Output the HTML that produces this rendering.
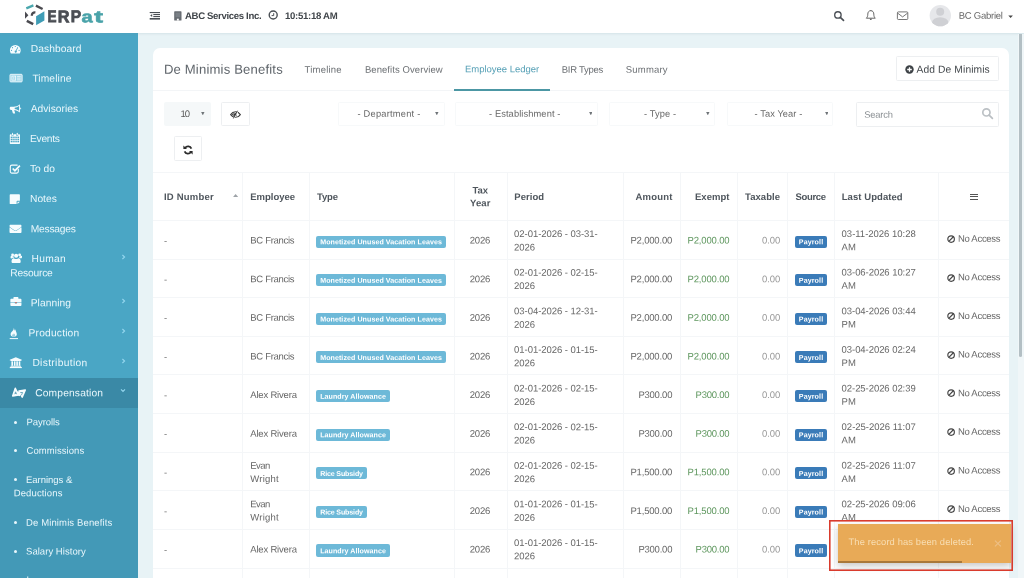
<!DOCTYPE html>
<html lang="en"><head><meta charset="utf-8"><title>ERPat - De Minimis Benefits</title>
<style>
html,body{margin:0;padding:0;}
body{width:1024px;height:578px;overflow:hidden;position:relative;background:#e8f3f6;font-family:"Liberation Sans",sans-serif;}
.b{position:absolute;box-sizing:border-box;display:block;}
.t{position:absolute;white-space:nowrap;display:block;transform-origin:0 0;}
#w{position:absolute;left:0;top:0;width:1024px;height:578px;overflow:hidden;will-change:transform;}
</style></head><body><div id="w">
<div class="b" style="left:153.0px;top:48.0px;width:856.00px;height:552.00px;background:#fff;border-radius:7px 7px 0 0;"></div>
<div class="b" style="left:0.0px;top:33.4px;width:138.40px;height:544.60px;background:#4aa6c5;"></div>
<div class="b" style="left:0.0px;top:407.8px;width:138.40px;height:170.20px;background:#4399b7;"></div>
<div class="b" style="left:0.0px;top:378.1px;width:138.40px;height:29.70px;background:#3a89a6;"></div>
<div class="b" style="left:0.0px;top:0.0px;width:1024.00px;height:33.40px;background:#fff;box-shadow:0 1px 2px rgba(120,150,160,.16);"></div>
<div class="b" style="left:1018.2px;top:34.0px;width:5.80px;height:544.00px;background:#f0f6f8;"></div>
<div class="b" style="left:1018.7px;top:34.0px;width:3.60px;height:323.00px;background:#b3bfc4;border-radius:0 0 2px 2px;"></div>
<span class="t" style="left:47px;top:6px;font-size:16.8px;line-height:21px;color:#4b4e54;transform:translate(0.60px,0.20px) rotate(.03deg) scaleX(0.8090);font-weight:700;-webkit-text-stroke:.8px #4b4e54;">E</span>
<span class="t" style="left:57px;top:6px;font-size:16.8px;line-height:21px;color:#4b4e54;transform:translate(0.80px,0.20px) rotate(.03deg) scaleX(0.9649);font-weight:700;-webkit-text-stroke:.8px #4b4e54;">R</span>
<span class="t" style="left:70px;top:6px;font-size:16.8px;line-height:21px;color:#4b4e54;transform:translate(0.80px,0.20px) rotate(.03deg) scaleX(0.9258);font-weight:700;-webkit-text-stroke:.8px #4b4e54;">P</span>
<span class="t" style="left:81px;top:6px;font-size:16.4px;line-height:20px;color:#4aa3a9;transform:translate(0.60px,0.30px) rotate(.03deg) scaleX(1.2216);font-weight:700;-webkit-text-stroke:.6px #4aa3a9;">a</span>
<span class="t" style="left:94px;top:6px;font-size:16.4px;line-height:20px;color:#4aa3a9;transform:translate(0.20px,0.30px) rotate(.03deg) scaleX(1.6000);font-weight:700;-webkit-text-stroke:.6px #4aa3a9;">t</span>
<span class="t" style="left:185px;top:8px;font-size:9.6px;line-height:13px;color:#41464b;transform:translate(0.00px,0.90px) rotate(.03deg);font-weight:700;letter-spacing:-0.348px;">ABC Services Inc.</span>
<span class="t" style="left:285px;top:8px;font-size:9.6px;line-height:13px;color:#41464b;transform:translate(0.00px,0.90px) rotate(.03deg);font-weight:700;letter-spacing:-0.287px;">10:51:18 AM</span>
<span class="t" style="left:958px;top:8px;font-size:9.5px;line-height:13px;color:#666;transform:translate(0.70px,0.80px) rotate(.03deg);letter-spacing:-0.244px;">BC Gabriel</span>
<span class="t" style="left:30px;top:41px;font-size:10.25px;line-height:13px;color:#e9f7fc;transform:translate(0.70px,0.90px) rotate(.03deg);letter-spacing:0.072px;">Dashboard</span>
<span class="t" style="left:32px;top:71px;font-size:10.25px;line-height:13px;color:#e9f7fc;transform:translate(0.40px,0.70px) rotate(.03deg);letter-spacing:0.089px;">Timeline</span>
<span class="t" style="left:30px;top:102px;font-size:10.25px;line-height:13px;color:#e9f7fc;transform:translate(0.70px,0.10px) rotate(.03deg);letter-spacing:0.006px;">Advisories</span>
<span class="t" style="left:30px;top:132px;font-size:10.25px;line-height:13px;color:#e9f7fc;transform:translate(0.00px,0.10px) rotate(.03deg);letter-spacing:-0.275px;">Events</span>
<span class="t" style="left:30px;top:162px;font-size:10.25px;line-height:13px;color:#e9f7fc;transform:translate(0.00px,0.00px) rotate(.03deg);letter-spacing:-0.031px;">To do</span>
<span class="t" style="left:30px;top:192px;font-size:10.25px;line-height:13px;color:#e9f7fc;transform:translate(0.00px,0.00px) rotate(.03deg);letter-spacing:0.012px;">Notes</span>
<span class="t" style="left:30px;top:222px;font-size:10.25px;line-height:13px;color:#e9f7fc;transform:translate(0.70px,0.20px) rotate(.03deg);letter-spacing:-0.207px;">Messages</span>
<span class="t" style="left:31px;top:252px;font-size:10.25px;line-height:13px;color:#e9f7fc;transform:translate(0.60px,0.10px) rotate(.03deg);letter-spacing:0.250px;">Human</span>
<span class="t" style="left:10px;top:266px;font-size:10.25px;line-height:13px;color:#e9f7fc;transform:translate(0.30px,0.30px) rotate(.03deg);letter-spacing:-0.196px;">Resource</span>
<span class="t" style="left:30px;top:296px;font-size:10.25px;line-height:13px;color:#e9f7fc;transform:translate(0.70px,0.30px) rotate(.03deg);letter-spacing:0.061px;">Planning</span>
<span class="t" style="left:28px;top:326px;font-size:10.25px;line-height:13px;color:#e9f7fc;transform:translate(0.60px,0.20px) rotate(.03deg);letter-spacing:0.178px;">Production</span>
<span class="t" style="left:32px;top:356px;font-size:10.25px;line-height:13px;color:#e9f7fc;transform:translate(0.40px,0.10px) rotate(.03deg);letter-spacing:0.323px;">Distribution</span>
<span class="t" style="left:35px;top:386px;font-size:10.25px;line-height:13px;color:#e9f7fc;transform:translate(0.20px,0.30px) rotate(.03deg);letter-spacing:0.152px;">Compensation</span>
<span class="t" style="left:26px;top:415px;font-size:9.5px;line-height:13px;color:#e9f7fc;transform:translate(0.60px,0.20px) rotate(.03deg);letter-spacing:-0.079px;">Payrolls</span>
<span class="t" style="left:26px;top:443px;font-size:9.5px;line-height:13px;color:#e9f7fc;transform:translate(0.60px,0.80px) rotate(.03deg);letter-spacing:0.060px;">Commissions</span>
<span class="t" style="left:26px;top:473px;font-size:9.5px;line-height:13px;color:#e9f7fc;transform:translate(0.00px,0.00px) rotate(.03deg);letter-spacing:-0.022px;">Earnings &amp;</span>
<span class="t" style="left:13px;top:486px;font-size:9.5px;line-height:13px;color:#e9f7fc;transform:translate(0.70px,0.30px) rotate(.03deg);letter-spacing:0.133px;">Deductions</span>
<span class="t" style="left:26px;top:515px;font-size:9.5px;line-height:13px;color:#e9f7fc;transform:translate(0.00px,0.70px) rotate(.03deg);letter-spacing:0.128px;">De Minimis Benefits</span>
<span class="t" style="left:26px;top:544px;font-size:9.5px;line-height:13px;color:#e9f7fc;transform:translate(0.00px,0.60px) rotate(.03deg);letter-spacing:0.044px;">Salary History</span>
<span class="t" style="left:26px;top:573px;font-size:9.5px;line-height:13px;color:#e9f7fc;transform:translate(0.40px,0.00px) rotate(.03deg);letter-spacing:-0.069px;">Loans</span>
<div class="b" style="left:13.5px;top:420.5px;width:3.00px;height:3.00px;background:#e9f7fc;border-radius:50%;"></div>
<div class="b" style="left:13.5px;top:449.1px;width:3.00px;height:3.00px;background:#e9f7fc;border-radius:50%;"></div>
<div class="b" style="left:13.5px;top:478.3px;width:3.00px;height:3.00px;background:#e9f7fc;border-radius:50%;"></div>
<div class="b" style="left:13.5px;top:521.0px;width:3.00px;height:3.00px;background:#e9f7fc;border-radius:50%;"></div>
<div class="b" style="left:13.5px;top:549.9px;width:3.00px;height:3.00px;background:#e9f7fc;border-radius:50%;"></div>
<div class="b" style="left:13.5px;top:578.7px;width:3.00px;height:3.00px;background:#e9f7fc;border-radius:50%;"></div>
<span class="t" style="left:163px;top:60px;font-size:13.1px;line-height:17px;color:#5f656b;transform:translate(0.90px,0.80px) rotate(.03deg);letter-spacing:0.172px;">De Minimis Benefits</span>
<span class="t" style="left:304px;top:62px;font-size:9.5px;line-height:13px;color:#6b6f73;transform:translate(0.60px,0.70px) rotate(.03deg);letter-spacing:0.200px;">Timeline</span>
<span class="t" style="left:364px;top:62px;font-size:9.5px;line-height:13px;color:#6b6f73;transform:translate(0.90px,0.70px) rotate(.03deg);letter-spacing:0.072px;">Benefits Overview</span>
<span class="t" style="left:465px;top:62px;font-size:9.5px;line-height:13px;color:#549fb5;transform:translate(0.00px,0.30px) rotate(.03deg);letter-spacing:-0.021px;">Employee Ledger</span>
<span class="t" style="left:561px;top:62px;font-size:9.5px;line-height:13px;color:#6b6f73;transform:translate(0.80px,0.70px) rotate(.03deg);letter-spacing:-0.278px;">BIR Types</span>
<span class="t" style="left:625px;top:62px;font-size:9.5px;line-height:13px;color:#6b6f73;transform:translate(0.80px,0.70px) rotate(.03deg);letter-spacing:0.196px;">Summary</span>
<div class="b" style="left:153.0px;top:90.0px;width:856.00px;height:1.00px;background:#f3f5f7;"></div>
<div class="b" style="left:454.3px;top:88.9px;width:95.60px;height:1.70px;background:#4c97a4;"></div>
<div class="b" style="left:895.6px;top:56.0px;width:103.40px;height:25.00px;border:1px solid #edeff1;border-radius:1.5px;background:#fff;"></div>
<span class="t" style="left:916px;top:62px;font-size:10.25px;line-height:13px;color:#42474b;transform:translate(0.60px,0.70px) rotate(.03deg);letter-spacing:0.104px;">Add De Minimis</span>
<div class="b" style="left:164.0px;top:102.3px;width:46.60px;height:23.40px;background:#f5f8f9;border-radius:2px;"></div>
<span class="t" style="left:180px;top:106px;font-size:9.5px;line-height:13px;color:#5a5a5a;transform:translate(0.60px,0.90px) rotate(.03deg);letter-spacing:-1.025px;">10</span>
<div class="b" style="left:221.0px;top:102.0px;width:28.80px;height:24.20px;border:1px solid #edeff1;border-radius:1.5px;background:#fff;"></div>
<div class="b" style="left:174.0px;top:136.0px;width:28.00px;height:25.00px;border:1px solid #edeff1;border-radius:1.5px;background:#fff;"></div>
<div class="b" style="left:338.0px;top:102.3px;width:106.50px;height:23.40px;border:1px solid #f7f9fa;border-radius:1.5px;background:#fff;"></div>
<span class="t" style="left:357px;top:107px;font-size:9.3px;line-height:12px;color:#666;transform:translate(0.50px,0.80px) rotate(.03deg);letter-spacing:0.221px;">- Department -</span>
<svg class="b" style="left:435.2px;top:111.8px;" width="3.6" height="3.4" viewBox="0 0 4 4"><path d="M0 0h4L2 4z" fill="#6f7478"/></svg>
<div class="b" style="left:454.6px;top:102.3px;width:143.60px;height:23.40px;border:1px solid #f7f9fa;border-radius:1.5px;background:#fff;"></div>
<span class="t" style="left:489px;top:107px;font-size:9.3px;line-height:12px;color:#666;transform:translate(0.00px,0.80px) rotate(.03deg);letter-spacing:0.102px;">- Establishment -</span>
<svg class="b" style="left:588.5px;top:111.8px;" width="3.6" height="3.4" viewBox="0 0 4 4"><path d="M0 0h4L2 4z" fill="#6f7478"/></svg>
<div class="b" style="left:609.0px;top:102.3px;width:106.40px;height:23.40px;border:1px solid #f7f9fa;border-radius:1.5px;background:#fff;"></div>
<span class="t" style="left:644px;top:107px;font-size:9.3px;line-height:12px;color:#666;transform:translate(0.00px,0.80px) rotate(.03deg);letter-spacing:0.107px;">- Type -</span>
<svg class="b" style="left:706.2px;top:111.8px;" width="3.6" height="3.4" viewBox="0 0 4 4"><path d="M0 0h4L2 4z" fill="#6f7478"/></svg>
<div class="b" style="left:727.3px;top:102.3px;width:105.50px;height:23.40px;border:1px solid #f7f9fa;border-radius:1.5px;background:#fff;"></div>
<span class="t" style="left:754px;top:107px;font-size:9.3px;line-height:12px;color:#666;transform:translate(0.60px,0.80px) rotate(.03deg);letter-spacing:0.070px;">- Tax Year -</span>
<svg class="b" style="left:824.5px;top:111.8px;" width="3.6" height="3.4" viewBox="0 0 4 4"><path d="M0 0h4L2 4z" fill="#6f7478"/></svg>
<svg class="b" style="left:201.1px;top:111.8px;" width="3.6" height="3.4" viewBox="0 0 4 4"><path d="M0 0h4L2 4z" fill="#6f7478"/></svg>
<div class="b" style="left:856.0px;top:102.0px;width:142.60px;height:24.60px;border:1px solid #edeff1;border-radius:1.5px;background:#fff;"></div>
<span class="t" style="left:864px;top:108px;font-size:9.35px;line-height:12px;color:#8a8f93;transform:translate(0.20px,0.80px) rotate(.03deg);letter-spacing:-0.190px;">Search</span>
<div class="b" style="left:153.0px;top:172.0px;width:856.00px;height:1.00px;background:#f4f6f8;"></div>
<div class="b" style="left:153.0px;top:220.0px;width:856.00px;height:1.00px;background:#f4f6f8;"></div>
<div class="b" style="left:153.0px;top:258.62px;width:856.00px;height:1.00px;background:#f4f6f8;"></div>
<div class="b" style="left:153.0px;top:297.24px;width:856.00px;height:1.00px;background:#f4f6f8;"></div>
<div class="b" style="left:153.0px;top:335.86px;width:856.00px;height:1.00px;background:#f4f6f8;"></div>
<div class="b" style="left:153.0px;top:374.48px;width:856.00px;height:1.00px;background:#f4f6f8;"></div>
<div class="b" style="left:153.0px;top:413.1px;width:856.00px;height:1.00px;background:#f4f6f8;"></div>
<div class="b" style="left:153.0px;top:451.72px;width:856.00px;height:1.00px;background:#f4f6f8;"></div>
<div class="b" style="left:153.0px;top:490.34px;width:856.00px;height:1.00px;background:#f4f6f8;"></div>
<div class="b" style="left:153.0px;top:528.96px;width:856.00px;height:1.00px;background:#f4f6f8;"></div>
<div class="b" style="left:153.0px;top:567.58px;width:856.00px;height:1.00px;background:#f4f6f8;"></div>
<div class="b" style="left:242.0px;top:172.0px;width:1.00px;height:428.00px;background:#f4f6f8;"></div>
<div class="b" style="left:309.2px;top:172.0px;width:1.00px;height:428.00px;background:#f4f6f8;"></div>
<div class="b" style="left:454.1px;top:172.0px;width:1.00px;height:428.00px;background:#f4f6f8;"></div>
<div class="b" style="left:506.7px;top:172.0px;width:1.00px;height:428.00px;background:#f4f6f8;"></div>
<div class="b" style="left:622.7px;top:172.0px;width:1.00px;height:428.00px;background:#f4f6f8;"></div>
<div class="b" style="left:680.0px;top:172.0px;width:1.00px;height:428.00px;background:#f4f6f8;"></div>
<div class="b" style="left:737.0px;top:172.0px;width:1.00px;height:428.00px;background:#f4f6f8;"></div>
<div class="b" style="left:787.0px;top:172.0px;width:1.00px;height:428.00px;background:#f4f6f8;"></div>
<div class="b" style="left:834.0px;top:172.0px;width:1.00px;height:428.00px;background:#f4f6f8;"></div>
<div class="b" style="left:937.7px;top:172.0px;width:1.00px;height:428.00px;background:#f4f6f8;"></div>
<span class="t" style="left:163px;top:190px;font-size:9.5px;line-height:13px;color:#4f565d;transform:translate(0.90px,0.10px) rotate(.03deg);font-weight:700;letter-spacing:0.225px;">ID Number</span>
<span class="t" style="left:250px;top:190px;font-size:9.5px;line-height:13px;color:#4f565d;transform:translate(0.30px,0.10px) rotate(.03deg);font-weight:700;letter-spacing:-0.025px;">Employee</span>
<span class="t" style="left:317px;top:190px;font-size:9.5px;line-height:13px;color:#4f565d;transform:translate(0.00px,0.10px) rotate(.03deg);font-weight:700;letter-spacing:-0.167px;">Type</span>
<span class="t" style="left:472px;top:183px;font-size:9.5px;line-height:13px;color:#4f565d;transform:translate(0.50px,0.50px) rotate(.03deg);font-weight:700;letter-spacing:-0.062px;">Tax</span>
<span class="t" style="left:470px;top:196px;font-size:9.5px;line-height:13px;color:#4f565d;transform:translate(0.00px,0.30px) rotate(.03deg);font-weight:700;letter-spacing:0.125px;">Year</span>
<span class="t" style="left:514px;top:190px;font-size:9.5px;line-height:13px;color:#4f565d;transform:translate(0.30px,0.10px) rotate(.03deg);font-weight:700;letter-spacing:0.040px;">Period</span>
<span class="t" style="left:635px;top:190px;font-size:9.5px;line-height:13px;color:#4f565d;transform:translate(0.40px,0.10px) rotate(.03deg);font-weight:700;letter-spacing:0.225px;">Amount</span>
<span class="t" style="left:695px;top:190px;font-size:9.5px;line-height:13px;color:#4f565d;transform:translate(0.00px,0.10px) rotate(.03deg);font-weight:700;letter-spacing:0.025px;">Exempt</span>
<span class="t" style="left:745px;top:190px;font-size:9.5px;line-height:13px;color:#4f565d;transform:translate(0.00px,0.10px) rotate(.03deg);font-weight:700;letter-spacing:0.062px;">Taxable</span>
<span class="t" style="left:795px;top:190px;font-size:9.5px;line-height:13px;color:#4f565d;transform:translate(0.50px,0.10px) rotate(.03deg);font-weight:700;letter-spacing:-0.350px;">Source</span>
<span class="t" style="left:841px;top:190px;font-size:9.5px;line-height:13px;color:#4f565d;transform:translate(0.70px,0.10px) rotate(.03deg);font-weight:700;letter-spacing:0.070px;">Last Updated</span>
<div class="b" style="left:969.8px;top:193.7px;width:8.20px;height:1.20px;background:#555;"></div>
<div class="b" style="left:969.8px;top:196.25px;width:8.20px;height:1.20px;background:#555;"></div>
<div class="b" style="left:969.8px;top:198.79999999999998px;width:8.20px;height:1.20px;background:#555;"></div>
<svg class="b" style="left:232.8px;top:193.6px;" width="5.2" height="3.1" viewBox="0 0 44 26"><path d="M0 26h44L22 0z" fill="#9ea3a8"/></svg>
<span class="t" style="left:164px;top:234px;font-size:9.5px;line-height:13px;color:#777;transform:translate(0.00px,0.10px) rotate(.03deg);">-</span>
<span class="t" style="left:250px;top:233px;font-size:9.5px;line-height:13px;color:#666;transform:translate(0.30px,0.60px) rotate(.03deg);letter-spacing:-0.300px;">BC Francis</span>
<div class="b" style="left:316.3px;top:235.5px;width:130.00px;height:12.10px;background:#6db9d8;border-radius:2px;"></div>
<span class="t" style="left:320px;top:237px;font-size:7.1px;line-height:10px;color:#fff;transform:translate(0.20px,0.20px) rotate(.03deg);font-weight:700;letter-spacing:0.059px;">Monetized Unused Vacation Leaves</span>
<span class="t" style="left:469px;top:233px;font-size:9.5px;line-height:13px;color:#666;transform:translate(0.80px,0.60px) rotate(.03deg);letter-spacing:-0.208px;">2026</span>
<span class="t" style="left:514px;top:227px;font-size:9.5px;line-height:13px;color:#666;transform:translate(0.10px,0.00px) rotate(.03deg);letter-spacing:-0.050px;">02-01-2026 - 03-31-</span>
<span class="t" style="left:514px;top:240px;font-size:9.5px;line-height:13px;color:#666;transform:translate(0.10px,0.40px) rotate(.03deg);letter-spacing:-0.075px;">2026</span>
<span class="t" style="left:630px;top:233px;font-size:9.5px;line-height:13px;color:#666;transform:translate(0.40px,0.60px) rotate(.03deg);letter-spacing:-0.172px;">P2,000.00</span>
<span class="t" style="left:687px;top:233px;font-size:9.5px;line-height:13px;color:#5d965d;transform:translate(0.60px,0.60px) rotate(.03deg);letter-spacing:-0.172px;">P2,000.00</span>
<span class="t" style="left:762px;top:233px;font-size:9.5px;line-height:13px;color:#999;transform:translate(0.00px,0.60px) rotate(.03deg);letter-spacing:-0.100px;">0.00</span>
<div class="b" style="left:795.2px;top:235.5px;width:31.50px;height:12.10px;background:#3a7bb8;border-radius:2px;"></div>
<span class="t" style="left:798px;top:237px;font-size:7.1px;line-height:10px;color:#fff;transform:translate(0.80px,0.20px) rotate(.03deg);font-weight:700;letter-spacing:0.108px;">Payroll</span>
<span class="t" style="left:841px;top:226px;font-size:9.5px;line-height:13px;color:#666;transform:translate(0.60px,0.90px) rotate(.03deg);letter-spacing:-0.010px;">03-11-2026 10:28</span>
<span class="t" style="left:841px;top:240px;font-size:9.5px;line-height:13px;color:#666;transform:translate(0.60px,0.20px) rotate(.03deg);">AM</span>
<svg class="b" style="left:946.8px;top:235.00px;" width="8.2" height="8.2" viewBox="0 0 16 16"><circle cx="8" cy="8" r="6.4" fill="none" stroke="#444" stroke-width="2.3"/><path d="M3.500 12.500L12.500 3.500" stroke="#444" stroke-width="2.3"/></svg>
<span class="t" style="left:957px;top:231px;font-size:9.5px;line-height:13px;color:#666;transform:translate(0.90px,0.70px) rotate(.03deg);letter-spacing:-0.272px;">No Access</span>
<span class="t" style="left:164px;top:272px;font-size:9.5px;line-height:13px;color:#777;transform:translate(0.00px,0.72px) rotate(.03deg);">-</span>
<span class="t" style="left:250px;top:272px;font-size:9.5px;line-height:13px;color:#666;transform:translate(0.30px,0.22px) rotate(.03deg);letter-spacing:-0.300px;">BC Francis</span>
<div class="b" style="left:316.3px;top:274.12px;width:130.00px;height:12.10px;background:#6db9d8;border-radius:2px;"></div>
<span class="t" style="left:320px;top:275px;font-size:7.1px;line-height:10px;color:#fff;transform:translate(0.20px,0.82px) rotate(.03deg);font-weight:700;letter-spacing:0.059px;">Monetized Unused Vacation Leaves</span>
<span class="t" style="left:469px;top:272px;font-size:9.5px;line-height:13px;color:#666;transform:translate(0.80px,0.22px) rotate(.03deg);letter-spacing:-0.208px;">2026</span>
<span class="t" style="left:514px;top:265px;font-size:9.5px;line-height:13px;color:#666;transform:translate(0.10px,0.62px) rotate(.03deg);letter-spacing:-0.050px;">02-01-2026 - 02-15-</span>
<span class="t" style="left:514px;top:279px;font-size:9.5px;line-height:13px;color:#666;transform:translate(0.10px,0.02px) rotate(.03deg);letter-spacing:-0.075px;">2026</span>
<span class="t" style="left:630px;top:272px;font-size:9.5px;line-height:13px;color:#666;transform:translate(0.40px,0.22px) rotate(.03deg);letter-spacing:-0.172px;">P2,000.00</span>
<span class="t" style="left:687px;top:272px;font-size:9.5px;line-height:13px;color:#5d965d;transform:translate(0.60px,0.22px) rotate(.03deg);letter-spacing:-0.172px;">P2,000.00</span>
<span class="t" style="left:762px;top:272px;font-size:9.5px;line-height:13px;color:#999;transform:translate(0.00px,0.22px) rotate(.03deg);letter-spacing:-0.100px;">0.00</span>
<div class="b" style="left:795.2px;top:274.12px;width:31.50px;height:12.10px;background:#3a7bb8;border-radius:2px;"></div>
<span class="t" style="left:798px;top:275px;font-size:7.1px;line-height:10px;color:#fff;transform:translate(0.80px,0.82px) rotate(.03deg);font-weight:700;letter-spacing:0.108px;">Payroll</span>
<span class="t" style="left:841px;top:265px;font-size:9.5px;line-height:13px;color:#666;transform:translate(0.60px,0.52px) rotate(.03deg);letter-spacing:-0.060px;">03-06-2026 10:27</span>
<span class="t" style="left:841px;top:278px;font-size:9.5px;line-height:13px;color:#666;transform:translate(0.60px,0.82px) rotate(.03deg);">AM</span>
<svg class="b" style="left:946.8px;top:273.62px;" width="8.2" height="8.2" viewBox="0 0 16 16"><circle cx="8" cy="8" r="6.4" fill="none" stroke="#444" stroke-width="2.3"/><path d="M3.500 12.500L12.500 3.500" stroke="#444" stroke-width="2.3"/></svg>
<span class="t" style="left:957px;top:270px;font-size:9.5px;line-height:13px;color:#666;transform:translate(0.90px,0.32px) rotate(.03deg);letter-spacing:-0.272px;">No Access</span>
<span class="t" style="left:164px;top:311px;font-size:9.5px;line-height:13px;color:#777;transform:translate(0.00px,0.34px) rotate(.03deg);">-</span>
<span class="t" style="left:250px;top:310px;font-size:9.5px;line-height:13px;color:#666;transform:translate(0.30px,0.84px) rotate(.03deg);letter-spacing:-0.300px;">BC Francis</span>
<div class="b" style="left:316.3px;top:312.74px;width:130.00px;height:12.10px;background:#6db9d8;border-radius:2px;"></div>
<span class="t" style="left:320px;top:314px;font-size:7.1px;line-height:10px;color:#fff;transform:translate(0.20px,0.44px) rotate(.03deg);font-weight:700;letter-spacing:0.059px;">Monetized Unused Vacation Leaves</span>
<span class="t" style="left:469px;top:310px;font-size:9.5px;line-height:13px;color:#666;transform:translate(0.80px,0.84px) rotate(.03deg);letter-spacing:-0.208px;">2026</span>
<span class="t" style="left:514px;top:304px;font-size:9.5px;line-height:13px;color:#666;transform:translate(0.10px,0.24px) rotate(.03deg);letter-spacing:-0.050px;">03-04-2026 - 12-31-</span>
<span class="t" style="left:514px;top:317px;font-size:9.5px;line-height:13px;color:#666;transform:translate(0.10px,0.64px) rotate(.03deg);letter-spacing:-0.075px;">2026</span>
<span class="t" style="left:630px;top:310px;font-size:9.5px;line-height:13px;color:#666;transform:translate(0.40px,0.84px) rotate(.03deg);letter-spacing:-0.172px;">P2,000.00</span>
<span class="t" style="left:687px;top:310px;font-size:9.5px;line-height:13px;color:#5d965d;transform:translate(0.60px,0.84px) rotate(.03deg);letter-spacing:-0.172px;">P2,000.00</span>
<span class="t" style="left:762px;top:310px;font-size:9.5px;line-height:13px;color:#999;transform:translate(0.00px,0.84px) rotate(.03deg);letter-spacing:-0.100px;">0.00</span>
<div class="b" style="left:795.2px;top:312.74px;width:31.50px;height:12.10px;background:#3a7bb8;border-radius:2px;"></div>
<span class="t" style="left:798px;top:314px;font-size:7.1px;line-height:10px;color:#fff;transform:translate(0.80px,0.44px) rotate(.03deg);font-weight:700;letter-spacing:0.108px;">Payroll</span>
<span class="t" style="left:841px;top:304px;font-size:9.5px;line-height:13px;color:#666;transform:translate(0.60px,0.14px) rotate(.03deg);letter-spacing:-0.060px;">03-04-2026 03:44</span>
<span class="t" style="left:841px;top:317px;font-size:9.5px;line-height:13px;color:#666;transform:translate(0.60px,0.44px) rotate(.03deg);">PM</span>
<svg class="b" style="left:946.8px;top:312.24px;" width="8.2" height="8.2" viewBox="0 0 16 16"><circle cx="8" cy="8" r="6.4" fill="none" stroke="#444" stroke-width="2.3"/><path d="M3.500 12.500L12.500 3.500" stroke="#444" stroke-width="2.3"/></svg>
<span class="t" style="left:957px;top:308px;font-size:9.5px;line-height:13px;color:#666;transform:translate(0.90px,0.94px) rotate(.03deg);letter-spacing:-0.272px;">No Access</span>
<span class="t" style="left:164px;top:349px;font-size:9.5px;line-height:13px;color:#777;transform:translate(0.00px,0.96px) rotate(.03deg);">-</span>
<span class="t" style="left:250px;top:349px;font-size:9.5px;line-height:13px;color:#666;transform:translate(0.30px,0.46px) rotate(.03deg);letter-spacing:-0.300px;">BC Francis</span>
<div class="b" style="left:316.3px;top:351.36px;width:130.00px;height:12.10px;background:#6db9d8;border-radius:2px;"></div>
<span class="t" style="left:320px;top:353px;font-size:7.1px;line-height:10px;color:#fff;transform:translate(0.20px,0.06px) rotate(.03deg);font-weight:700;letter-spacing:0.059px;">Monetized Unused Vacation Leaves</span>
<span class="t" style="left:469px;top:349px;font-size:9.5px;line-height:13px;color:#666;transform:translate(0.80px,0.46px) rotate(.03deg);letter-spacing:-0.208px;">2026</span>
<span class="t" style="left:514px;top:342px;font-size:9.5px;line-height:13px;color:#666;transform:translate(0.10px,0.86px) rotate(.03deg);letter-spacing:-0.050px;">01-01-2026 - 01-15-</span>
<span class="t" style="left:514px;top:356px;font-size:9.5px;line-height:13px;color:#666;transform:translate(0.10px,0.26px) rotate(.03deg);letter-spacing:-0.075px;">2026</span>
<span class="t" style="left:630px;top:349px;font-size:9.5px;line-height:13px;color:#666;transform:translate(0.40px,0.46px) rotate(.03deg);letter-spacing:-0.172px;">P2,000.00</span>
<span class="t" style="left:687px;top:349px;font-size:9.5px;line-height:13px;color:#5d965d;transform:translate(0.60px,0.46px) rotate(.03deg);letter-spacing:-0.172px;">P2,000.00</span>
<span class="t" style="left:762px;top:349px;font-size:9.5px;line-height:13px;color:#999;transform:translate(0.00px,0.46px) rotate(.03deg);letter-spacing:-0.100px;">0.00</span>
<div class="b" style="left:795.2px;top:351.36px;width:31.50px;height:12.10px;background:#3a7bb8;border-radius:2px;"></div>
<span class="t" style="left:798px;top:353px;font-size:7.1px;line-height:10px;color:#fff;transform:translate(0.80px,0.06px) rotate(.03deg);font-weight:700;letter-spacing:0.108px;">Payroll</span>
<span class="t" style="left:841px;top:342px;font-size:9.5px;line-height:13px;color:#666;transform:translate(0.60px,0.76px) rotate(.03deg);letter-spacing:-0.060px;">03-04-2026 02:24</span>
<span class="t" style="left:841px;top:356px;font-size:9.5px;line-height:13px;color:#666;transform:translate(0.60px,0.06px) rotate(.03deg);">PM</span>
<svg class="b" style="left:946.8px;top:350.86px;" width="8.2" height="8.2" viewBox="0 0 16 16"><circle cx="8" cy="8" r="6.4" fill="none" stroke="#444" stroke-width="2.3"/><path d="M3.500 12.500L12.500 3.500" stroke="#444" stroke-width="2.3"/></svg>
<span class="t" style="left:957px;top:347px;font-size:9.5px;line-height:13px;color:#666;transform:translate(0.90px,0.56px) rotate(.03deg);letter-spacing:-0.272px;">No Access</span>
<span class="t" style="left:164px;top:388px;font-size:9.5px;line-height:13px;color:#777;transform:translate(0.00px,0.58px) rotate(.03deg);">-</span>
<span class="t" style="left:250px;top:388px;font-size:9.5px;line-height:13px;color:#666;transform:translate(0.30px,0.08px) rotate(.03deg);letter-spacing:-0.193px;">Alex Rivera</span>
<div class="b" style="left:316.3px;top:389.98px;width:73.70px;height:12.10px;background:#6db9d8;border-radius:2px;"></div>
<span class="t" style="left:320px;top:391px;font-size:7.1px;line-height:10px;color:#fff;transform:translate(0.20px,0.68px) rotate(.03deg);font-weight:700;letter-spacing:0.055px;">Laundry Allowance</span>
<span class="t" style="left:469px;top:388px;font-size:9.5px;line-height:13px;color:#666;transform:translate(0.80px,0.08px) rotate(.03deg);letter-spacing:-0.208px;">2026</span>
<span class="t" style="left:514px;top:381px;font-size:9.5px;line-height:13px;color:#666;transform:translate(0.10px,0.48px) rotate(.03deg);letter-spacing:-0.050px;">02-01-2026 - 02-15-</span>
<span class="t" style="left:514px;top:394px;font-size:9.5px;line-height:13px;color:#666;transform:translate(0.10px,0.88px) rotate(.03deg);letter-spacing:-0.075px;">2026</span>
<span class="t" style="left:638px;top:388px;font-size:9.5px;line-height:13px;color:#666;transform:translate(0.40px,0.08px) rotate(.03deg);letter-spacing:-0.229px;">P300.00</span>
<span class="t" style="left:695px;top:388px;font-size:9.5px;line-height:13px;color:#5d965d;transform:translate(0.60px,0.08px) rotate(.03deg);letter-spacing:-0.229px;">P300.00</span>
<span class="t" style="left:762px;top:388px;font-size:9.5px;line-height:13px;color:#999;transform:translate(0.00px,0.08px) rotate(.03deg);letter-spacing:-0.100px;">0.00</span>
<div class="b" style="left:795.2px;top:389.98px;width:31.50px;height:12.10px;background:#3a7bb8;border-radius:2px;"></div>
<span class="t" style="left:798px;top:391px;font-size:7.1px;line-height:10px;color:#fff;transform:translate(0.80px,0.68px) rotate(.03deg);font-weight:700;letter-spacing:0.108px;">Payroll</span>
<span class="t" style="left:841px;top:381px;font-size:9.5px;line-height:13px;color:#666;transform:translate(0.60px,0.38px) rotate(.03deg);letter-spacing:-0.060px;">02-25-2026 02:39</span>
<span class="t" style="left:841px;top:394px;font-size:9.5px;line-height:13px;color:#666;transform:translate(0.60px,0.68px) rotate(.03deg);">PM</span>
<svg class="b" style="left:946.8px;top:389.48px;" width="8.2" height="8.2" viewBox="0 0 16 16"><circle cx="8" cy="8" r="6.4" fill="none" stroke="#444" stroke-width="2.3"/><path d="M3.500 12.500L12.500 3.500" stroke="#444" stroke-width="2.3"/></svg>
<span class="t" style="left:957px;top:386px;font-size:9.5px;line-height:13px;color:#666;transform:translate(0.90px,0.18px) rotate(.03deg);letter-spacing:-0.272px;">No Access</span>
<span class="t" style="left:164px;top:427px;font-size:9.5px;line-height:13px;color:#777;transform:translate(0.00px,0.20px) rotate(.03deg);">-</span>
<span class="t" style="left:250px;top:426px;font-size:9.5px;line-height:13px;color:#666;transform:translate(0.30px,0.70px) rotate(.03deg);letter-spacing:-0.193px;">Alex Rivera</span>
<div class="b" style="left:316.3px;top:428.6px;width:73.70px;height:12.10px;background:#6db9d8;border-radius:2px;"></div>
<span class="t" style="left:320px;top:430px;font-size:7.1px;line-height:10px;color:#fff;transform:translate(0.20px,0.30px) rotate(.03deg);font-weight:700;letter-spacing:0.055px;">Laundry Allowance</span>
<span class="t" style="left:469px;top:426px;font-size:9.5px;line-height:13px;color:#666;transform:translate(0.80px,0.70px) rotate(.03deg);letter-spacing:-0.208px;">2026</span>
<span class="t" style="left:514px;top:420px;font-size:9.5px;line-height:13px;color:#666;transform:translate(0.10px,0.10px) rotate(.03deg);letter-spacing:-0.050px;">02-01-2026 - 02-15-</span>
<span class="t" style="left:514px;top:433px;font-size:9.5px;line-height:13px;color:#666;transform:translate(0.10px,0.50px) rotate(.03deg);letter-spacing:-0.075px;">2026</span>
<span class="t" style="left:638px;top:426px;font-size:9.5px;line-height:13px;color:#666;transform:translate(0.40px,0.70px) rotate(.03deg);letter-spacing:-0.229px;">P300.00</span>
<span class="t" style="left:695px;top:426px;font-size:9.5px;line-height:13px;color:#5d965d;transform:translate(0.60px,0.70px) rotate(.03deg);letter-spacing:-0.229px;">P300.00</span>
<span class="t" style="left:762px;top:426px;font-size:9.5px;line-height:13px;color:#999;transform:translate(0.00px,0.70px) rotate(.03deg);letter-spacing:-0.100px;">0.00</span>
<div class="b" style="left:795.2px;top:428.6px;width:31.50px;height:12.10px;background:#3a7bb8;border-radius:2px;"></div>
<span class="t" style="left:798px;top:430px;font-size:7.1px;line-height:10px;color:#fff;transform:translate(0.80px,0.30px) rotate(.03deg);font-weight:700;letter-spacing:0.108px;">Payroll</span>
<span class="t" style="left:841px;top:420px;font-size:9.5px;line-height:13px;color:#666;transform:translate(0.60px,0.00px) rotate(.03deg);letter-spacing:-0.010px;">02-25-2026 11:07</span>
<span class="t" style="left:841px;top:433px;font-size:9.5px;line-height:13px;color:#666;transform:translate(0.60px,0.30px) rotate(.03deg);">AM</span>
<svg class="b" style="left:946.8px;top:428.10px;" width="8.2" height="8.2" viewBox="0 0 16 16"><circle cx="8" cy="8" r="6.4" fill="none" stroke="#444" stroke-width="2.3"/><path d="M3.500 12.500L12.500 3.500" stroke="#444" stroke-width="2.3"/></svg>
<span class="t" style="left:957px;top:424px;font-size:9.5px;line-height:13px;color:#666;transform:translate(0.90px,0.80px) rotate(.03deg);letter-spacing:-0.272px;">No Access</span>
<span class="t" style="left:164px;top:465px;font-size:9.5px;line-height:13px;color:#777;transform:translate(0.00px,0.82px) rotate(.03deg);">-</span>
<span class="t" style="left:250px;top:458px;font-size:9.5px;line-height:13px;color:#666;transform:translate(0.30px,0.72px) rotate(.03deg);letter-spacing:-0.542px;">Evan</span>
<span class="t" style="left:250px;top:471px;font-size:9.5px;line-height:13px;color:#666;transform:translate(0.30px,0.92px) rotate(.03deg);letter-spacing:0.210px;">Wright</span>
<div class="b" style="left:316.3px;top:467.22px;width:50.70px;height:12.10px;background:#6db9d8;border-radius:2px;"></div>
<span class="t" style="left:320px;top:468px;font-size:7.1px;line-height:10px;color:#fff;transform:translate(0.20px,0.92px) rotate(.03deg);font-weight:700;letter-spacing:-0.159px;">Rice Subsidy</span>
<span class="t" style="left:469px;top:465px;font-size:9.5px;line-height:13px;color:#666;transform:translate(0.80px,0.32px) rotate(.03deg);letter-spacing:-0.208px;">2026</span>
<span class="t" style="left:514px;top:458px;font-size:9.5px;line-height:13px;color:#666;transform:translate(0.10px,0.72px) rotate(.03deg);letter-spacing:-0.050px;">02-01-2026 - 02-15-</span>
<span class="t" style="left:514px;top:472px;font-size:9.5px;line-height:13px;color:#666;transform:translate(0.10px,0.12px) rotate(.03deg);letter-spacing:-0.075px;">2026</span>
<span class="t" style="left:630px;top:465px;font-size:9.5px;line-height:13px;color:#666;transform:translate(0.40px,0.32px) rotate(.03deg);letter-spacing:-0.172px;">P1,500.00</span>
<span class="t" style="left:687px;top:465px;font-size:9.5px;line-height:13px;color:#5d965d;transform:translate(0.60px,0.32px) rotate(.03deg);letter-spacing:-0.172px;">P1,500.00</span>
<span class="t" style="left:762px;top:465px;font-size:9.5px;line-height:13px;color:#999;transform:translate(0.00px,0.32px) rotate(.03deg);letter-spacing:-0.100px;">0.00</span>
<div class="b" style="left:795.2px;top:467.22px;width:31.50px;height:12.10px;background:#3a7bb8;border-radius:2px;"></div>
<span class="t" style="left:798px;top:468px;font-size:7.1px;line-height:10px;color:#fff;transform:translate(0.80px,0.92px) rotate(.03deg);font-weight:700;letter-spacing:0.108px;">Payroll</span>
<span class="t" style="left:841px;top:458px;font-size:9.5px;line-height:13px;color:#666;transform:translate(0.60px,0.62px) rotate(.03deg);letter-spacing:-0.010px;">02-25-2026 11:07</span>
<span class="t" style="left:841px;top:471px;font-size:9.5px;line-height:13px;color:#666;transform:translate(0.60px,0.92px) rotate(.03deg);">AM</span>
<svg class="b" style="left:946.8px;top:466.72px;" width="8.2" height="8.2" viewBox="0 0 16 16"><circle cx="8" cy="8" r="6.4" fill="none" stroke="#444" stroke-width="2.3"/><path d="M3.500 12.500L12.500 3.500" stroke="#444" stroke-width="2.3"/></svg>
<span class="t" style="left:957px;top:463px;font-size:9.5px;line-height:13px;color:#666;transform:translate(0.90px,0.42px) rotate(.03deg);letter-spacing:-0.272px;">No Access</span>
<span class="t" style="left:164px;top:504px;font-size:9.5px;line-height:13px;color:#777;transform:translate(0.00px,0.44px) rotate(.03deg);">-</span>
<span class="t" style="left:250px;top:497px;font-size:9.5px;line-height:13px;color:#666;transform:translate(0.30px,0.34px) rotate(.03deg);letter-spacing:-0.542px;">Evan</span>
<span class="t" style="left:250px;top:510px;font-size:9.5px;line-height:13px;color:#666;transform:translate(0.30px,0.54px) rotate(.03deg);letter-spacing:0.210px;">Wright</span>
<div class="b" style="left:316.3px;top:505.84px;width:50.70px;height:12.10px;background:#6db9d8;border-radius:2px;"></div>
<span class="t" style="left:320px;top:507px;font-size:7.1px;line-height:10px;color:#fff;transform:translate(0.20px,0.54px) rotate(.03deg);font-weight:700;letter-spacing:-0.159px;">Rice Subsidy</span>
<span class="t" style="left:469px;top:503px;font-size:9.5px;line-height:13px;color:#666;transform:translate(0.80px,0.94px) rotate(.03deg);letter-spacing:-0.208px;">2026</span>
<span class="t" style="left:514px;top:497px;font-size:9.5px;line-height:13px;color:#666;transform:translate(0.10px,0.34px) rotate(.03deg);letter-spacing:-0.050px;">01-01-2026 - 01-15-</span>
<span class="t" style="left:514px;top:510px;font-size:9.5px;line-height:13px;color:#666;transform:translate(0.10px,0.74px) rotate(.03deg);letter-spacing:-0.075px;">2026</span>
<span class="t" style="left:630px;top:503px;font-size:9.5px;line-height:13px;color:#666;transform:translate(0.40px,0.94px) rotate(.03deg);letter-spacing:-0.172px;">P1,500.00</span>
<span class="t" style="left:687px;top:503px;font-size:9.5px;line-height:13px;color:#5d965d;transform:translate(0.60px,0.94px) rotate(.03deg);letter-spacing:-0.172px;">P1,500.00</span>
<span class="t" style="left:762px;top:503px;font-size:9.5px;line-height:13px;color:#999;transform:translate(0.00px,0.94px) rotate(.03deg);letter-spacing:-0.100px;">0.00</span>
<div class="b" style="left:795.2px;top:505.84px;width:31.50px;height:12.10px;background:#3a7bb8;border-radius:2px;"></div>
<span class="t" style="left:798px;top:507px;font-size:7.1px;line-height:10px;color:#fff;transform:translate(0.80px,0.54px) rotate(.03deg);font-weight:700;letter-spacing:0.108px;">Payroll</span>
<span class="t" style="left:841px;top:497px;font-size:9.5px;line-height:13px;color:#666;transform:translate(0.60px,0.24px) rotate(.03deg);letter-spacing:-0.060px;">02-25-2026 09:06</span>
<span class="t" style="left:841px;top:510px;font-size:9.5px;line-height:13px;color:#666;transform:translate(0.60px,0.54px) rotate(.03deg);">AM</span>
<svg class="b" style="left:946.8px;top:505.34px;" width="8.2" height="8.2" viewBox="0 0 16 16"><circle cx="8" cy="8" r="6.4" fill="none" stroke="#444" stroke-width="2.3"/><path d="M3.500 12.500L12.500 3.500" stroke="#444" stroke-width="2.3"/></svg>
<span class="t" style="left:957px;top:502px;font-size:9.5px;line-height:13px;color:#666;transform:translate(0.90px,0.04px) rotate(.03deg);letter-spacing:-0.272px;">No Access</span>
<span class="t" style="left:164px;top:543px;font-size:9.5px;line-height:13px;color:#777;transform:translate(0.00px,0.06px) rotate(.03deg);">-</span>
<span class="t" style="left:250px;top:542px;font-size:9.5px;line-height:13px;color:#666;transform:translate(0.30px,0.56px) rotate(.03deg);letter-spacing:-0.193px;">Alex Rivera</span>
<div class="b" style="left:316.3px;top:544.46px;width:73.70px;height:12.10px;background:#6db9d8;border-radius:2px;"></div>
<span class="t" style="left:320px;top:546px;font-size:7.1px;line-height:10px;color:#fff;transform:translate(0.20px,0.16px) rotate(.03deg);font-weight:700;letter-spacing:0.055px;">Laundry Allowance</span>
<span class="t" style="left:469px;top:542px;font-size:9.5px;line-height:13px;color:#666;transform:translate(0.80px,0.56px) rotate(.03deg);letter-spacing:-0.208px;">2026</span>
<span class="t" style="left:514px;top:535px;font-size:9.5px;line-height:13px;color:#666;transform:translate(0.10px,0.96px) rotate(.03deg);letter-spacing:-0.050px;">01-01-2026 - 01-15-</span>
<span class="t" style="left:514px;top:549px;font-size:9.5px;line-height:13px;color:#666;transform:translate(0.10px,0.36px) rotate(.03deg);letter-spacing:-0.075px;">2026</span>
<span class="t" style="left:638px;top:542px;font-size:9.5px;line-height:13px;color:#666;transform:translate(0.40px,0.56px) rotate(.03deg);letter-spacing:-0.229px;">P300.00</span>
<span class="t" style="left:695px;top:542px;font-size:9.5px;line-height:13px;color:#5d965d;transform:translate(0.60px,0.56px) rotate(.03deg);letter-spacing:-0.229px;">P300.00</span>
<span class="t" style="left:762px;top:542px;font-size:9.5px;line-height:13px;color:#999;transform:translate(0.00px,0.56px) rotate(.03deg);letter-spacing:-0.100px;">0.00</span>
<div class="b" style="left:795.2px;top:544.46px;width:31.50px;height:12.10px;background:#3a7bb8;border-radius:2px;"></div>
<span class="t" style="left:798px;top:546px;font-size:7.1px;line-height:10px;color:#fff;transform:translate(0.80px,0.16px) rotate(.03deg);font-weight:700;letter-spacing:0.108px;">Payroll</span>
<span class="t" style="left:841px;top:535px;font-size:9.5px;line-height:13px;color:#666;transform:translate(0.60px,0.86px) rotate(.03deg);letter-spacing:-0.060px;">02-25-2026 09:06</span>
<span class="t" style="left:841px;top:549px;font-size:9.5px;line-height:13px;color:#666;transform:translate(0.60px,0.16px) rotate(.03deg);">AM</span>
<svg class="b" style="left:946.8px;top:543.96px;" width="8.2" height="8.2" viewBox="0 0 16 16"><circle cx="8" cy="8" r="6.4" fill="none" stroke="#444" stroke-width="2.3"/><path d="M3.500 12.500L12.500 3.500" stroke="#444" stroke-width="2.3"/></svg>
<span class="t" style="left:957px;top:540px;font-size:9.5px;line-height:13px;color:#666;transform:translate(0.90px,0.66px) rotate(.03deg);letter-spacing:-0.272px;">No Access</span>
<div class="b" style="left:837.5px;top:524.0px;width:173.80px;height:39.00px;background:#e8aa57;box-shadow:0 3px 7px rgba(0,0,0,.22);"></div>
<div class="b" style="left:837.5px;top:561.3px;width:124.90px;height:2.00px;background:#a9783a;"></div>
<span class="t" style="left:848px;top:536px;font-size:9.35px;line-height:12px;color:#f8dfb5;transform:translate(0.50px,0.00px) rotate(.03deg);letter-spacing:0.126px;">The record has been deleted.</span>
<span class="t" style="left:993px;top:533px;font-size:15px;line-height:19px;color:#edbf84;transform:translate(0.60px,0.40px) rotate(.03deg);">×</span>
<svg class="b" style="left:827px;top:518px;" width="188" height="55" viewBox="0 0 188 55"><rect x="2.800" y="2.800" width="182.400" height="49.400" fill="none" stroke="#d93b2d" stroke-width="1.600"/></svg>
<svg class="b" style="left:20px;top:0px;" width="32" height="32" viewBox="0 0 32 32"><path d="M6.3 8.4L13.4 5.4" stroke="#4aa7ad" stroke-width="2.3" fill="none"/><path d="M15.9 5.6L22.6 9.0" stroke="#4a4a50" stroke-width="2.3" fill="none"/><path d="M16.1 16.2L24.4 11.2V20.6L16.1 25.2z" fill="#3f9db6"/><path d="M5 11.6L8.4 15.2L5 18.8z" fill="#4a4a50"/><path d="M15.400 12.400c-2.300-.200-3.600 1-3.600 3.300" fill="none" stroke="#4a4a50" stroke-width="2.300"/><path d="M6.8 20.8L13.2 24.2" stroke="#4a4a50" stroke-width="2.5" fill="none"/></svg>
<svg class="b" style="left:149px;top:11px;" width="12" height="10" viewBox="0 0 12 10"><g fill="#4a4f55"><rect x="0.7" y="1" width="10.3" height="1.1"/><rect x="4.3" y="3" width="6.7" height="1.1"/><rect x="4.3" y="5" width="6.7" height="1.1"/><rect x="0.7" y="7" width="10.3" height="1.6"/><path d="M3.2 2.9v3.2L1.2 4.5z"/></g></svg>
<svg class="b" style="left:174px;top:11px;" width="8" height="10" viewBox="0 0 8 10"><rect x="0.2" y="0.3" width="7.3" height="9.3" rx="0.6" fill="#666b71"/><rect x="1.5" y="1.6" width="4.7" height="4.6" fill="#7a8086"/><rect x="2.9" y="7.7" width="1.9" height="1.9" fill="#fff"/></svg>
<svg class="b" style="left:267px;top:8.9px;" width="12" height="12" viewBox="0 0 12 12"><circle cx="6.2" cy="6" r="4.0" fill="none" stroke="#4a4f55" stroke-width="1.4"/><path d="M6.7 4.2V6.6H4.6" fill="none" stroke="#4a4f55" stroke-width="1"/></svg>
<svg class="b" style="left:832px;top:9px;" width="14" height="13" viewBox="0 0 14 13"><circle cx="5.9" cy="5.9" r="3.2" fill="none" stroke="#4a4f55" stroke-width="1.35"/><path d="M8.3 8.4L11.5 11.4" stroke="#4a4f55" stroke-width="1.7" stroke-linecap="round"/></svg>
<svg class="b" style="left:864px;top:9px;" width="14" height="13" viewBox="0 0 14 13"><path d="M6.8 1.7c-2 0-3 1.500-3 3.400 0 2.200-.6 3.300-1.500 4.100h9c-.9-.8-1.500-1.900-1.500-4.100 0-1.900-1-3.400-3-3.400z" fill="none" stroke="#555" stroke-width="0.9" stroke-linejoin="round"/><path d="M6.800 1.700v-.7" stroke="#555" stroke-width="0.9"/><path d="M5.700 9.700c.1.800.5 1.200 1.100 1.200s1-.4 1.100-1.200z" fill="#555"/></svg>
<svg class="b" style="left:896px;top:10px;" width="14" height="12" viewBox="0 0 14 12"><rect x="1.400" y="1.900" width="10.400" height="7.600" rx="0.900" fill="none" stroke="#666" stroke-width="0.9"/><path d="M1.600 3.100L6.600 6.900L11.600 3.100" fill="none" stroke="#666" stroke-width="0.9"/></svg>
<svg class="b" style="left:929px;top:4px;" width="23" height="23" viewBox="0 0 23 23"><defs><clipPath id="av"><circle cx="11.3" cy="11.6" r="10.7"/></clipPath></defs><circle cx="11.3" cy="11.600" r="10.700" fill="#e6e7ea"/><g clip-path="url(#av)" fill="#cfd0d4"><circle cx="11.200" cy="7.800" r="4"/><ellipse cx="11.200" cy="18.600" rx="8.200" ry="5.300"/></g></svg>
<svg class="b" style="left:1008px;top:15px;" width="6" height="4" viewBox="0 0 6 4"><path d="M0.300 0.500h4.600L2.600 3z" fill="#444"/></svg>
<svg class="b" style="left:9px;top:44px;" width="13" height="11" viewBox="0 0 13 11"><path d="M6.300 0.900a5.400 5.400 0 0 0-5.400 5.400c0 1.100.3 2.100.8 2.900.1.200.3.300.5.300h8.200c.2 0 .4-.1.500-.3.500-.8.800-1.800.8-2.900A5.400 5.400 0 0 0 6.300.9z" fill="#f6fcfe"/><g fill="#4aa6c5"><circle cx="2.500" cy="6.300" r=".6"/><circle cx="3.500" cy="3.700" r=".6"/><circle cx="6.300" cy="2.500" r=".6"/><circle cx="10.100" cy="6.300" r=".6"/><path d="M8.500 3.100l.7.300-1.700 3.400a1.100 1.100 0 1 1-.7-.3z"/></g></svg>
<svg class="b" style="left:9.1px;top:73px;" width="14.6" height="11" viewBox="0 0 15 11"><rect x="1" y="1.200" width="12.500" height="7.800" rx="0.800" fill="#d4f3ff" fill-opacity=".62" stroke="#f6fcfe" stroke-width="0.9"/><rect x="3" y="3" width="3.800" height="4.200" fill="none" stroke="#f6fcfe" stroke-width=".8"/><path d="M8.300 3.300h3.700M8.300 5.100h3.700M8.300 6.900h3.700" stroke="#f6fcfe" stroke-width=".8"/><path d="M4.900 3.800v2.600" stroke="#f6fcfe" stroke-width=".7"/></svg>
<svg class="b" style="left:9px;top:103px;" width="13" height="12" viewBox="0 0 13 12"><path d="M10.900 1.300v8.200c-2.100-1.700-4-2.400-5.700-2.500l.9 2.900c.1.400-.1.600-.5.600H4.400c-.3 0-.5-.1-.6-.4l-.9-3.200H2c-.7 0-1.200-.5-1.200-1.200V4.900c0-.7.500-1.200 1.200-1.200h2.700c1.900 0 4-.6 6.200-2.400z" fill="#f6fcfe"/><path d="M10 3.100v4.600c-1.500-1-2.900-1.500-4.300-1.700V4.800c1.400-.2 2.800-.7 4.300-1.700z" fill="#4aa6c5"/><rect x="11.200" y="4.500" width=".9" height="1.800" rx=".4" fill="#f6fcfe"/></svg>
<svg class="b" style="left:9px;top:132px;" width="12" height="13" viewBox="0 0 12 13"><path d="M1.500 2.200h8.800c.4 0 .7.300.7.700v8.300c0 .4-.3.700-.700.700H1.500c-.4 0-.7-.3-.7-.7V2.900c0-.4.300-.7.700-.7z" fill="#f6fcfe"/><g fill="#4aa6c5"><rect x="1.700" y="4.600" width="1.900" height="1.500"/><rect x="4.200" y="4.600" width="1.500" height="1.500"/><rect x="6.300" y="4.600" width="1.500" height="1.500"/><rect x="8.400" y="4.600" width="1.700" height="1.500"/><rect x="1.700" y="6.700" width="1.900" height="1.500"/><rect x="4.200" y="6.700" width="1.500" height="1.500"/><rect x="6.300" y="6.700" width="1.500" height="1.500"/><rect x="8.400" y="6.700" width="1.700" height="1.500"/><rect x="1.700" y="8.800" width="1.900" height="1.500"/><rect x="4.200" y="8.800" width="1.500" height="1.500"/><rect x="6.300" y="8.800" width="1.500" height="1.500"/><rect x="8.400" y="8.800" width="1.700" height="1.500"/><rect x="2.600" y="1.300" width="1.800" height="2.600" rx=".5"/><rect x="7.400" y="1.300" width="1.800" height="2.600" rx=".5"/></g><rect x="3" y=".8" width="1" height="2.600" rx=".5" fill="#f6fcfe"/><rect x="7.800" y=".8" width="1" height="2.600" rx=".5" fill="#f6fcfe"/></svg>
<svg class="b" style="left:9px;top:163px;" width="13" height="12" viewBox="0 0 13 12"><path d="M9.300 6.200v2.300c0 .9-.7 1.600-1.600 1.600H2.900c-.9 0-1.600-.7-1.600-1.600V3.700c0-.9.700-1.600 1.600-1.600h5.300" fill="none" stroke="#f6fcfe" stroke-width="1.100" stroke-linecap="round"/><path d="M3.700 5.500l2.200 2.200 5-5" fill="none" stroke="#f6fcfe" stroke-width="1.700"/></svg>
<svg class="b" style="left:9px;top:192.6px;" width="12" height="12" viewBox="0 0 12 12"><path d="M1.400 1.300h8.800c.4 0 .7.300.7.700v5.800H8.300c-.4 0-.7.300-.7.700v2.600H1.400c-.4 0-.7-.3-.7-.7V2c0-.4.300-.7.700-.7z" fill="#f6fcfe"/><path d="M8.500 8.700h2.400l-2.400 2.400z" fill="#f6fcfe"/></svg>
<svg class="b" style="left:9px;top:224px;" width="13" height="10" viewBox="0 0 13 10"><path d="M.5 3.300c.2.200 3.200 2.300 4.300 3 .5.400 1.100.8 1.700.8s1.200-.4 1.700-.8c1.100-.7 4.100-2.800 4.300-3v4.600c0 .6-.5 1.100-1.100 1.100H1.600c-.6 0-1.100-.5-1.100-1.100z" fill="#f6fcfe"/><path d="M12.500 1.900c0 .7-.6 1.400-1.200 1.800-1 .7-2 1.400-3 2.100-.4.300-1.200.9-1.800.9s-1.400-.6-1.800-.9c-1-.7-2-1.400-3-2.100C1.200 3.300.5 2.600.5 2c0-.7.400-1.200 1.100-1.200h9.800c.6 0 1.100.5 1.100 1.100z" fill="#f6fcfe"/></svg>
<svg class="b" style="left:9.5px;top:252.3px;" width="12.6" height="11.7" viewBox="0 0 14 13"><g fill="#f6fcfe"><circle cx="6.800" cy="4.200" r="2.300"/><circle cx="2.900" cy="3.200" r="1.600"/><circle cx="10.700" cy="3.200" r="1.600"/><path d="M3.200 12.200c-.9 0-1.500-.6-1.500-1.400 0-1.700.4-3.900 2.600-3.900.3.200 1.200 1 2.500 1s2.200-.8 2.500-1c2.200 0 2.600 2.200 2.600 3.900 0 .8-.6 1.400-1.500 1.400z"/><path d="M3.600 6.400c-.9 0-1.600.4-2 .9H1.500C.9 7.300.6 7 .6 6.500c0-1.200.1-2.200 1.200-2.200.2.100.7.500 1.400.5.200 0 .5 0 .7-.1.100.6.200 1.200.6 1.700zM13 6.500c0 .5-.3.800-.9.800h-.1c-.4-.5-1.100-.9-2-.9.400-.5.500-1.100.6-1.700.2.100.5.100.7.100.7 0 1.200-.4 1.400-.5 1.100 0 1.200 1 1.200 2.200z" /></g></svg>
<svg class="b" style="left:9.5px;top:296.4px;" width="12" height="11.1" viewBox="0 0 13 12"><path d="M4.600 2.200h3.600v.8H4.600zM3.700 3V1.900c0-.4.300-.7.700-.7h4c.4 0 .7.300.7.700V3h2.200c.6 0 1.100.5 1.100 1.100v2.400H.4V4.100C.4 3.500.9 3 1.500 3z" fill="#f6fcfe"/><path d="M.4 7h4.700v.7c0 .3.200.5.500.5h1.600c.3 0 .5-.2.500-.5V7h4.700v2.700c0 .6-.5 1.100-1.100 1.100H1.500c-.6 0-1.100-.5-1.100-1.100z" fill="#f6fcfe"/><rect x="5.500" y="6.500" width="1.800" height="1.200" fill="#d9776a"/></svg>
<svg class="b" style="left:9px;top:326.5px;" width="10" height="13" viewBox="0 0 10 13"><path d="M4.600.8c.5 1.300-.2 2.200-1.100 3.100C2.500 5 1.600 5.900 1.600 7.200c0 1.500 1.100 2.500 2.600 2.500h1c1.500 0 2.600-1 2.600-2.400 0-2-1.400-3.100-1.300-4.800-1 .5-1.300 1.500-1.200 2.400C5.400 3.800 5.700 1.900 4.600.8z" fill="#f6fcfe"/><path d="M4.400 9.700c-.8 0-1.300-.5-1.300-1.200 0-.9.800-1.300 1.300-2.300.2.500.2 1 .1 1.500.4-.3.700-.8.700-1.300.6.600 1 1.300 1 2.100 0 .7-.5 1.200-1.300 1.200z" fill="#4aa6c5" fill-opacity=".55"/><rect x=".7" y="11" width="8.300" height="1.100" fill="#f6fcfe" fill-opacity=".9"/></svg>
<svg class="b" style="left:9px;top:356px;" width="14" height="13" viewBox="0 0 14 13"><g fill="#f6fcfe"><path d="M6.800 1.300l6 2.400v.8h-.8c0 .200-.2.400-.4.400H2c-.2 0-.4-.2-.4-.4H.8v-.8z"/><rect x="2.400" y="5.300" width="1.600" height="4.500"/><rect x="4.900" y="5.300" width="1.600" height="4.500"/><rect x="7.300" y="5.300" width="1.600" height="4.500"/><rect x="9.700" y="5.300" width="1.600" height="4.500"/><rect x="1.600" y="9.800" width="10.400" height=".9"/><rect x=".8" y="10.900" width="12" height="1.200"/></g></svg>
<svg class="b" style="left:10.5px;top:386px;" width="16" height="13" viewBox="0 0 16 13"><g fill="#f6fcfe" stroke="#f6fcfe" stroke-width="1.500" stroke-linejoin="round"><path d="M4.300 2.300L7.600 9l-5.900.900z"/><path d="M8 5l6.300-1.100-3.100 7.200z"/><path d="M5 6.200l4.500 0-1 3.200z"/></g><path d="M3.700 8.200l.9-2.400.9 2.400M4 7.400h1.300" stroke="#3a89a6" stroke-width=".6" fill="none"/><path d="M9.300 6.500h2.300l-1.200 2.700" stroke="#3a89a6" stroke-width=".7" fill="none"/></svg>
<svg class="b" style="left:120.5px;top:253.89999999999998px;" width="5" height="6" viewBox="0 0 5 6"><path d="M1.400 1L3.600 3L1.400 5" fill="none" stroke="#93d6ee" stroke-width="1.1"/></svg>
<svg class="b" style="left:120.5px;top:298px;" width="5" height="6" viewBox="0 0 5 6"><path d="M1.400 1L3.600 3L1.400 5" fill="none" stroke="#93d6ee" stroke-width="1.1"/></svg>
<svg class="b" style="left:120.5px;top:328px;" width="5" height="6" viewBox="0 0 5 6"><path d="M1.400 1L3.600 3L1.400 5" fill="none" stroke="#93d6ee" stroke-width="1.1"/></svg>
<svg class="b" style="left:120.5px;top:358px;" width="5" height="6" viewBox="0 0 5 6"><path d="M1.400 1L3.600 3L1.400 5" fill="none" stroke="#93d6ee" stroke-width="1.1"/></svg>
<svg class="b" style="left:119.5px;top:387.5px;" width="6" height="5" viewBox="0 0 6 5"><path d="M1 1.400L3 3.400L5 1.400" fill="none" stroke="#93d6ee" stroke-width="1.1"/></svg>
<svg class="b" style="left:904.6px;top:64.7px;" width="9" height="9" viewBox="0 0 9 9"><circle cx="4.500" cy="4.500" r="4.200" fill="#3d4246"/><path d="M4.500 2.200v4.600M2.200 4.500h4.600" stroke="#fff" stroke-width="1.300"/></svg>
<svg class="b" style="left:229.7px;top:110px;" width="11" height="9.2" viewBox="0 0 12 10"><path d="M.7 5C2 3 3.800 2 6 2s4 1 5.300 3C10 7 8.200 8 6 8S2 7 .7 5z" fill="#fff" stroke="#3c3c3c" stroke-width="1.150"/><path d="M6 2.700a2.300 2.300 0 0 0 0 4.600c-1.500 0-2.800-.8-3.900-2.300 1.100-1.500 2.400-2.300 3.900-2.300z" fill="#3c3c3c"/><circle cx="5.800" cy="5" r="1.700" fill="#3c3c3c"/><path d="M9 1L4.400 9.200" stroke="#fff" stroke-width="1"/><path d="M8.200 .8L3.700 9.200" stroke="#3c3c3c" stroke-width="1"/></svg>
<svg class="b" style="left:182.9px;top:144.8px;" width="10" height="10" viewBox="0 0 10 10"><path d="M8.400 3.600A3.600 3.600 0 0 0 2.100 2.900" fill="none" stroke="#2c2c2c" stroke-width="1.800"/><path d="M1.600 6.400A3.600 3.600 0 0 0 7.900 7.100" fill="none" stroke="#2c2c2c" stroke-width="1.800"/><path d="M.4.500v3.600h3.600z" fill="#2c2c2c"/><path d="M9.600 9.500v-3.600h-3.600z" fill="#2c2c2c"/></svg>
<svg class="b" style="left:981px;top:107px;" width="13" height="13" viewBox="0 0 13 13"><circle cx="5.400" cy="5.400" r="3.600" fill="none" stroke="#bcc1c5" stroke-width="1.700"/><path d="M8.100 8.100L11.400 11.400" stroke="#b9bec2" stroke-width="1.700" stroke-linecap="round"/></svg>
</div></body></html>
